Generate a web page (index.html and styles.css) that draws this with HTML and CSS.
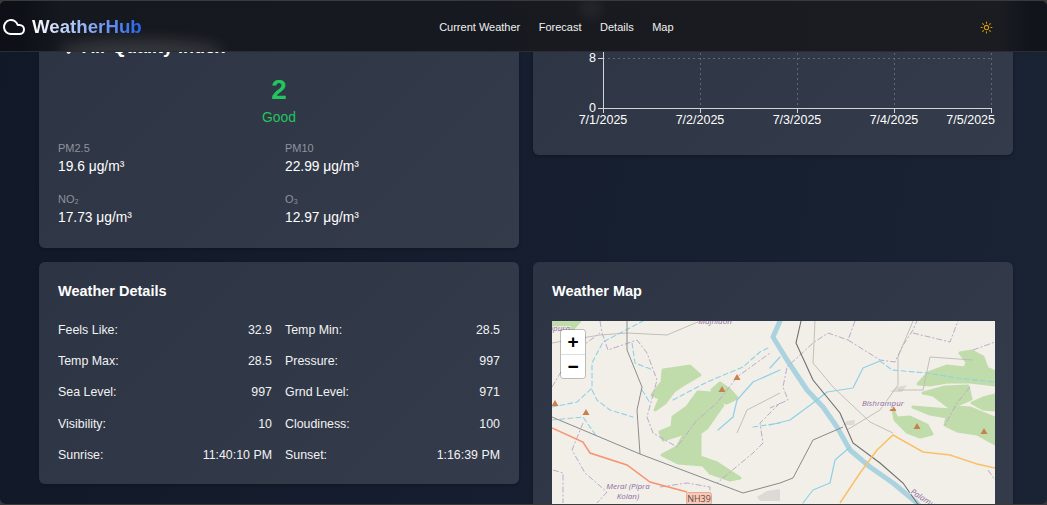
FILE: index.html
```html
<!DOCTYPE html>
<html lang="en">
<head>
    <meta charset="UTF-8">
    <meta name="viewport" content="width=device-width, initial-scale=1.0">
    <title>WeatherHub</title>
    <link rel="stylesheet" href="styles.css">
</head>
<body>
<div class="window">
    <header class="topbar">
        <!-- what shows through the frosted bar when the page is scrolled -->
        <span class="glow glow-title"></span>
        <span class="glow glow-tick"></span>
        <div class="logo">
            <svg class="logo-icon" viewBox="0 0 24 24" fill="none" stroke="#fff" stroke-width="2" stroke-linecap="round" stroke-linejoin="round"><path d="M17.5 19H9a7 7 0 1 1 6.71-9h1.79a4.5 4.5 0 1 1 0 9Z"/></svg>
            <span class="logo-text">WeatherHub</span>
        </div>
        <nav class="nav">
            <a href="#">Current Weather</a>
            <a href="#">Forecast</a>
            <a href="#">Details</a>
            <a href="#">Map</a>
        </nav>
        <button class="theme-btn" type="button" aria-label="Toggle theme">
            <svg viewBox="0 0 24 24" fill="none" stroke="#d19a0a" stroke-width="2" stroke-linecap="round" stroke-linejoin="round"><circle cx="12" cy="12" r="4"/><path d="M12 2v2M12 20v2M4.93 4.93l1.41 1.41M17.66 17.66l1.41 1.41M2 12h2M20 12h2M6.34 17.66l-1.41 1.41M19.07 4.93l-1.41 1.41"/></svg>
        </button>
    </header>

    <main class="content">
        <section class="card aqi-card">
            <h2 class="aqi-title">
                <svg viewBox="0 0 24 24" fill="none" stroke="#fff" stroke-width="2" stroke-linecap="round" stroke-linejoin="round"><path d="M17.7 7.7a2.500 2.500 0 1 1 1.800 4.300H2M9.600 4.600A2 2 0 1 1 11 8H2M12.600 19.400A2 2 0 1 0 14 16H2"/></svg>
                Air Quality Index
            </h2>
            <div class="aqi-value">2</div>
            <div class="aqi-label">Good</div>
            <div class="aqi-grid">
                <div><div class="aqi-name">PM2.5</div><div class="aqi-num">19.6 μg/m³</div></div>
                <div><div class="aqi-name">PM10</div><div class="aqi-num">22.99 μg/m³</div></div>
                <div><div class="aqi-name">NO₂</div><div class="aqi-num">17.73 μg/m³</div></div>
                <div><div class="aqi-name">O₃</div><div class="aqi-num">12.97 μg/m³</div></div>
            </div>
        </section>

        <section class="card chart-card">
            <svg class="chart" viewBox="0 0 480 214" width="480" height="214">
                <path class="grid-lines" d="M70 17.500H458M70 67.500H458M70 117.500H458M167.500 17V167M264.500 17V167M361.500 17V167M458.500 17V167"/>
                <path class="axis-lines" d="M70.500 17V167.500H458.500M65 67.500H70M65 117.500H70M65 167.500H70M70.500 167V172M167.500 167V172M264.500 167V172M361.500 167V172M458.500 167V172"/>
                <g class="chart-text">
                    <text x="63" y="71" text-anchor="end">16</text>
                    <text x="63" y="121" text-anchor="end">8</text>
                    <text x="63" y="171" text-anchor="end">0</text>
                    <text x="70" y="183" text-anchor="middle">7/1/2025</text>
                    <text x="167" y="183" text-anchor="middle">7/2/2025</text>
                    <text x="264" y="183" text-anchor="middle">7/3/2025</text>
                    <text x="361" y="183" text-anchor="middle">7/4/2025</text>
                    <text x="462" y="183" text-anchor="end">7/5/2025</text>
                </g>
            </svg>
        </section>

        <section class="card details-card">
            <h2 class="card-title">Weather Details</h2>
            <div class="details-grid">
                <div class="row"><span>Feels Like:</span><span>32.9</span></div>
                <div class="row"><span>Temp Min:</span><span>28.5</span></div>
                <div class="row"><span>Temp Max:</span><span>28.5</span></div>
                <div class="row"><span>Pressure:</span><span>997</span></div>
                <div class="row"><span>Sea Level:</span><span>997</span></div>
                <div class="row"><span>Grnd Level:</span><span>971</span></div>
                <div class="row"><span>Visibility:</span><span>10</span></div>
                <div class="row"><span>Cloudiness:</span><span>100</span></div>
                <div class="row"><span>Sunrise:</span><span>11:40:10 PM</span></div>
                <div class="row"><span>Sunset:</span><span>1:16:39 PM</span></div>
            </div>
        </section>

        <section class="card map-card">
            <h2 class="card-title">Weather Map</h2>
            <div class="map">
                <svg class="map-svg" viewBox="0 0 443 200" width="443" height="200">
                    <rect width="443" height="200" fill="#f2efe9"/>
                    <g fill="#c0dcab" stroke="#c0dcab" stroke-width="3" stroke-linejoin="round">
                        <path d="M0 0H28L18 11L0 8Z"/>
                        <path d="M111 49L125 47L138 45L148 54L131 64L122 70L113 82L103 89L108 77L100 74L110 61Z"/>
                        <path d="M146 71L158 72L171 84L155 107L148 112L148 136L165 142L188 157L178 159L158 152L151 144L126 142L110 134L125 126L133 112L111 119L108 111L120 106L121 96L135 86Z"/>
                        <path d="M160 69L168 62L178 69L185 77L175 82L161 76Z"/>
                        <path d="M366 63L376 52L395 45L413 47L415 41L408 32L420 30L431 36L435 47L443 51V64L418 61L395 61L378 64Z"/>
                        <path d="M371 72L393 66L416 65L419 78L405 84L401 89L381 74Z"/>
                        <path d="M361 86L385 88L400 89L405 86L418 87L443 97V123L425 113L405 110L393 104L395 96L378 93Z"/>
                        <path d="M420 82L431 77L443 74V89L431 88Z"/>
                        <path d="M341 89L345 97L358 96L375 104L380 113L368 116L355 111L343 99Z"/>
                    </g>
                    <g fill="#dcd9d6">
                        <path d="M205 176L215 170L228 168V180H208Z"/>
                        <path d="M338 71L345 66L355 64L350 71Z"/>
                        <path d="M291 104L295 100L303 99L302 104Z"/>
                    </g>
                    <g fill="none" stroke="#aad3df" stroke-linecap="round" stroke-linejoin="round">
                        <path stroke-width="5" d="M228 0L221 16L235 39L255 69L271 86L285 106L298 129L318 146L341 162L365 182L380 200"/>
                        <path stroke="#8fd0e8" stroke-width="1.200" d="M166 109L181 96L185 79L201 61L228 49M218 104L238 99L261 82L275 71L301 67L311 47L328 40M218 47L228 36M251 182L261 169L278 162L283 139L298 126"/>
                        <path stroke="#8fd0e8" stroke-width="1.100" stroke-dasharray="5 3" d="M0 86L25 81L40 67L40 42L51 21L91 0M40 69L45 79L58 89L81 96M80 22L83 42L101 49M90 69L98 82M121 79L155 61L191 46L208 31L218 26M0 99L31 96L45 116M201 106L228 102M328 40L340 49L375 52L405 57L443 61"/>
                    </g>
                    <g fill="none" stroke="#bcaaca" stroke-width="1" stroke-dasharray="6 2 2 2">
                        <path d="M48 0L50 12L56 29L85 19L95 32L105 59L95 96L101 112L125 126L145 99L165 82L185 56L218 32M0 66L10 49L25 29L48 12M31 102L20 129L33 152L55 171L45 182M1 149L11 152L11 182M228 82L208 102L211 122L201 132L165 162M108 166L135 162L158 166L158 182"/>
                        <path d="M303 0L296 19L276 12L261 22L235 46L231 66L236 79L218 87M296 19L328 39L343 41L350 26L361 9L365 0M361 12L398 21L406 0M421 29L443 21M418 66L405 82L393 104M436 149L443 159"/>
                    </g>
                    <g fill="none" stroke="#bdb9b4" stroke-width="0.900">
                        <path d="M0 22L48 14L75 12L115 14L148 0M185 112L195 89L228 72M263 0L261 42L281 66L318 101L341 112M361 0L346 36L346 64L328 89L295 109M346 69L371 69L378 36L421 39"/>
                    </g>
                    <g fill="none">
                        <path stroke="#8d8d8d" stroke-width="1" d="M75 0L75 29L90 66L85 89L88 133"/>
                        <path stroke="#8a8a8a" stroke-width="1" d="M0 96L88 133L191 172L228 162L241 157L261 119L291 106"/>
                        <path stroke="#6f6f6f" stroke-width="1.100" d="M249 0L244 22L261 59L288 92L301 122L328 142L351 162L365 182L380 200"/>
                        <path stroke="#f9936f" stroke-width="1.500" d="M0 107L31 121L38 132L75 144L98 161L135 171"/>
                        <path stroke="#f9c06a" stroke-width="1.500" d="M288 182L308 152L325 129L341 114L371 131L398 134L425 143L443 147"/>
                    </g>
                    <g fill="#c98050">
                        <path d="M3 79L6.500 85H-0.500Z"/>
                        <path d="M34 88L37.500 94H30.500Z"/>
                        <path d="M170 65L173.500 71H166.500Z"/>
                        <path d="M185 53L188.500 59H181.500Z"/>
                        <path d="M341 84L344.500 90H337.500Z"/>
                        <path d="M365 102L368.500 108H361.500Z"/>
                        <path d="M432 107L435.500 113H428.500Z"/>
                    </g>
                    <g class="map-label">
                        <text x="18" y="10" text-anchor="end">Sonpura</text>
                        <text x="163" y="3" text-anchor="middle">Majhiaon</text>
                        <text x="76" y="168" text-anchor="middle">Meral (Pipra</text>
                        <text x="76" y="178" text-anchor="middle">Kolan)</text>
                        <text x="331" y="85" text-anchor="middle">Bishrampur</text>
                        <text x="358" y="172" transform="rotate(33 358 172)">Palamu</text>
                    </g>
                    <rect x="134.500" y="171.500" width="25" height="12" rx="2" fill="#f6c9b9" stroke="#e8a994"/>
                    <text class="road-label" x="147" y="181" text-anchor="middle">NH39</text>
                </svg>
                <div class="zoom-box">
                    <button type="button">+</button>
                    <button type="button">−</button>
                </div>
            </div>
        </section>
    </main>
</div>
</body>
</html>
```

FILE: styles.css
```css
* {
    box-sizing: border-box;
}
html, body {
    margin: 0;
    padding: 0;
    height: 100%;
    background-color: #3a3a3a;
}
body {
    font-family: "Liberation Sans", Arial, sans-serif;
    color: #fff;
    overflow: hidden;
}
.window {
    position: relative;
    height: 100vh;
    overflow: hidden;
    border-top: 1px solid #3a3a3a;
    border-bottom: 1px solid #3a3a3a;
    border-radius: 6px;
    background: linear-gradient(100deg, #111929 0%, #1a2334 100%);
}
.topbar {
    position: absolute;
    top: 0;
    left: 0;
    right: 0;
    z-index: 10;
    height: 51px;
    padding: 2px 46px 0 2px;
    display: flex;
    align-items: center;
    justify-content: space-between;
    overflow: hidden;
    background: linear-gradient(to right, #0c0f15 0, #0e1117 25px, #15181e 60px, #16191f 500px, #181a20 540px, #1a1c22 1000px, #11141b 1030px);
    border-bottom: 1px solid #2a2d33;
}
.glow {
    position: absolute;
    border-radius: 50%;
    background-color: rgba(255, 255, 255, 0.13);
    filter: blur(7px);
}
.glow-title {
    left: 58px;
    top: 38px;
    width: 165px;
    height: 24px;
}
.glow-tick {
    left: 582px;
    top: -2px;
    width: 18px;
    height: 18px;
    background-color: rgba(255, 255, 255, 0.08);
}
.logo {
    position: relative;
    display: flex;
    align-items: center;
    gap: 6px;
}
.logo-icon {
    width: 24px;
    height: 24px;
}
.logo-text {
    font-size: 18.7px;
    font-weight: 700;
    background: linear-gradient(to right, #ffffff, #2563eb);
    -webkit-background-clip: text;
    background-clip: text;
    color: transparent;
}
.nav {
    position: relative;
    display: flex;
    gap: 18.500px;
}
.nav a {
    color: #f1f1f1;
    font-size: 11px;
    text-decoration: none;
}
.theme-btn {
    width: 30px;
    height: 30px;
    padding: 0;
    border: none;
    background: none;
    display: flex;
    align-items: center;
    justify-content: center;
}
.theme-btn svg {
    width: 13px;
    height: 13px;
}
.content {
    margin: -60px 34px 0 39px;
    display: grid;
    grid-template-columns: 1fr 1fr;
    gap: 14px;
    align-items: start;
}
.card {
    background: linear-gradient(135deg, #2d3443 0%, #343b4a 100%);
    border-radius: 6px;
    padding: 19px;
    box-shadow: 0 1px 3px rgba(0, 0, 0, 0.25);
}
.card-title {
    margin: 0;
    font-size: 14.500px;
    line-height: 20px;
    font-weight: 700;
}
.aqi-card {
    margin-top: 78px;
    height: 229px;
    padding-top: 18px;
}
.aqi-title {
    margin: 0;
    display: flex;
    align-items: center;
    gap: 6px;
    font-size: 18px;
    line-height: 20px;
    font-weight: 700;
}
.aqi-title svg {
    width: 18px;
    height: 18px;
}
.aqi-value {
    margin-top: 16px;
    text-align: center;
    font-size: 28px;
    line-height: 34px;
    font-weight: 700;
    color: #22c55e;
}
.aqi-label {
    margin-top: 1px;
    text-align: center;
    font-size: 13.900px;
    line-height: 18px;
    color: #22c55e;
}
.aqi-grid {
    margin-top: 15px;
    display: grid;
    grid-template-columns: 214px 1fr;
    column-gap: 13px;
    row-gap: 16px;
}
.aqi-name {
    font-size: 11px;
    line-height: 14px;
    color: #8d93a0;
}
.aqi-num {
    margin-top: 2px;
    font-size: 13.800px;
    line-height: 19px;
}
.details-card {
    height: 222px;
}
.details-grid {
    margin-top: 13px;
    display: grid;
    grid-template-columns: 214px 1fr;
    column-gap: 13px;
}
.row {
    display: flex;
    justify-content: space-between;
    height: 31.300px;
    align-items: center;
    font-size: 12.400px;
    color: #f1f2f4;
}
.chart-card {
    height: 214px;
    padding: 0;
}
.chart {
    display: block;
}
.grid-lines {
    fill: none;
    stroke: #5f6877;
    stroke-width: 1;
    stroke-dasharray: 2 3;
}
.axis-lines {
    fill: none;
    stroke: #d1d5db;
    stroke-width: 1;
}
.chart-text text {
    fill: #fff;
    font-size: 12.500px;
}
.map-card {
    height: 270px;
    padding-right: 18px;
}
.map {
    position: relative;
    margin-top: 20px;
    height: 200px;
    overflow: hidden;
}
.map-svg {
    display: block;
}
.map-label text {
    fill: #8f6a9f;
    font-size: 8px;
    font-family: "Open Sans", sans-serif;
    font-style: italic;
    paint-order: stroke;
    stroke: #f2efe9;
    stroke-width: 1.500px;
}
.road-label {
    fill: #6b4a3e;
    font-size: 9px;
    font-family: "Open Sans", sans-serif;
}
.zoom-box {
    position: absolute;
    top: 9px;
    left: 9px;
    width: 24px;
    display: flex;
    flex-direction: column;
    border-radius: 3px;
    box-shadow: 0 0 0 1px rgba(0, 0, 0, 0.22);
    overflow: hidden;
}
.zoom-box button {
    width: 24px;
    height: 24px;
    padding: 0;
    border: none;
    background-color: #fff;
    color: #000;
    font-family: "Liberation Sans", Arial, sans-serif;
    font-size: 19px;
    font-weight: 700;
    line-height: 24px;
}
.zoom-box button + button {
    border-top: 1px solid #ddd;
}
```
